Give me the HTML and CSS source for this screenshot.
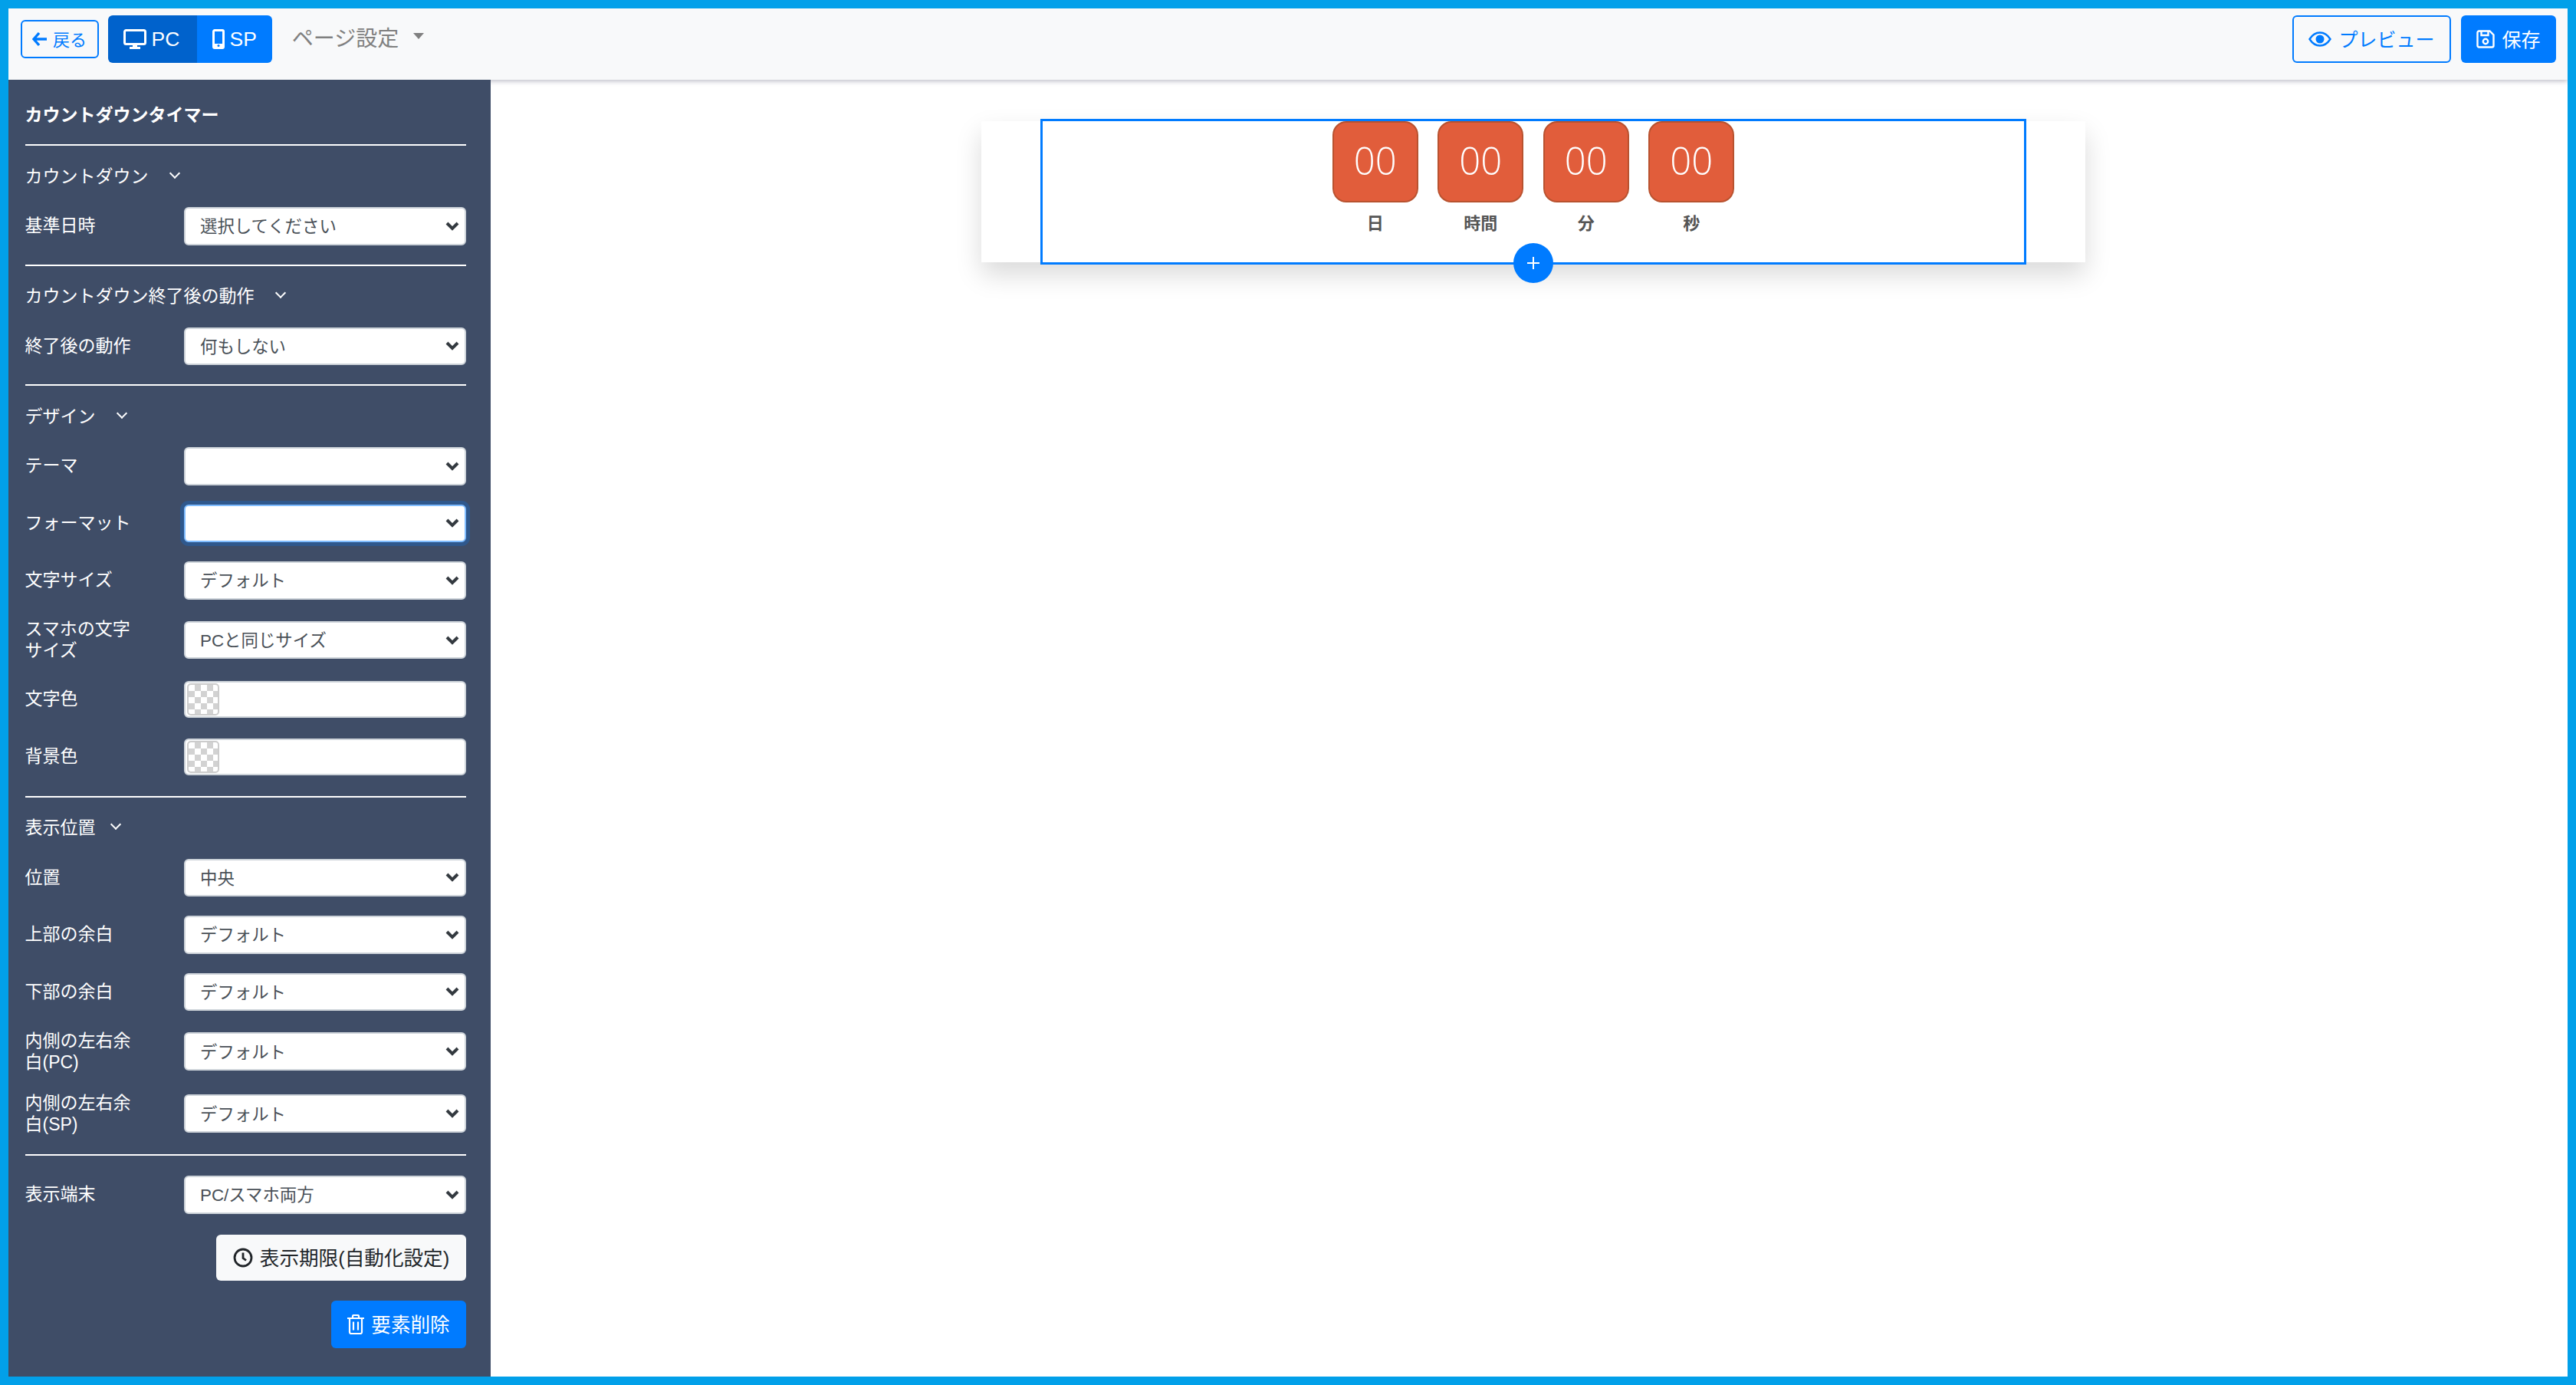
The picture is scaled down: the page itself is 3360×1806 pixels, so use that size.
FILE: index.html
```html
<!DOCTYPE html>
<html lang="ja">
<head>
    <meta charset="UTF-8">
    <meta name="viewport" content="width=device-width, initial-scale=1.0">
    <title>カウントダウンタイマー</title>
    <link rel="stylesheet" href="styles.css">
</head>
<body>
<div class="frame">

    <header class="topbar">
        <button class="btn btn-back">
            <svg class="icon" width="20" height="20" viewBox="0 0 20 20"><path d="M9 2 2 10l7 8M3 10h16" fill="none" stroke="currentColor" stroke-width="3.4"/></svg>
            戻る
        </button>
        <div class="device-group">
            <button class="device device-active">
                <svg class="icon" width="30" height="26" viewBox="0 0 30 26"><path d="M3.5 1.500h23a2 2 0 0 1 2 2v14a2 2 0 0 1-2 2h-23a2 2 0 0 1-2-2v-14a2 2 0 0 1 2-2z" fill="none" stroke="currentColor" stroke-width="3"/><path d="M12 20h6v3h-6zM8 23h14v3H8z" fill="currentColor"/></svg>
                PC
            </button>
            <button class="device">
                <svg class="icon" width="16" height="26" viewBox="0 0 16 26"><path d="M3 1.500h10a1.500 1.500 0 0 1 1.500 1.500v20a1.500 1.500 0 0 1-1.500 1.500H3A1.500 1.500 0 0 1 1.500 23V3A1.500 1.500 0 0 1 3 1.500z" fill="none" stroke="currentColor" stroke-width="3"/><path d="M2 19h12v5H2z" fill="currentColor"/><circle cx="8" cy="21.500" r="1.500" fill="#007bff"/></svg>
                SP
            </button>
        </div>
        <div class="page-setting">ページ設定<span class="caret"></span></div>
        <div class="topbar-right">
            <button class="btn btn-preview">
                <svg class="icon" width="30" height="20" viewBox="0 0 30 20"><path d="M1.500 10C5 4.500 9.500 1.500 15 1.500S25 4.500 28.500 10C25 15.500 20.500 18.500 15 18.500S5 15.500 1.500 10z" fill="none" stroke="currentColor" stroke-width="2.400"/><circle cx="15" cy="10" r="5.500" fill="currentColor"/></svg>
                プレビュー
            </button>
            <button class="btn btn-primary btn-save">
                <svg class="icon" width="24" height="24" viewBox="0 0 24 24"><path d="M3.500 1.500h14l5 5v14a2 2 0 0 1-2 2h-17a2 2 0 0 1-2-2v-17a2 2 0 0 1 2-2z" fill="none" stroke="currentColor" stroke-width="2.400"/><path d="M6.500 2v5h9V2" fill="none" stroke="currentColor" stroke-width="2.400"/><circle cx="12" cy="15" r="3.200" fill="none" stroke="currentColor" stroke-width="2.400"/></svg>
                保存
            </button>
        </div>
    </header>

    <div class="workspace">
        <aside class="sidebar">
            <div class="side-title">カウントダウンタイマー</div>
            <hr class="rule">

            <div class="side-head">カウントダウン<span class="chevron"></span></div>
            <div class="row">
                <label class="row-label">基準日時</label>
                <select class="select"><option>選択してください</option></select>
            </div>
            <hr class="rule">

            <div class="side-head">カウントダウン終了後の動作<span class="chevron"></span></div>
            <div class="row">
                <label class="row-label">終了後の動作</label>
                <select class="select"><option>何もしない</option></select>
            </div>
            <hr class="rule">

            <div class="side-head">デザイン<span class="chevron"></span></div>
            <div class="row">
                <label class="row-label">テーマ</label>
                <select class="select"><option></option></select>
            </div>
            <div class="row">
                <label class="row-label">フォーマット</label>
                <select class="select select-focus"><option></option></select>
            </div>
            <div class="row">
                <label class="row-label">文字サイズ</label>
                <select class="select"><option>デフォルト</option></select>
            </div>
            <div class="row row-wrap">
                <label class="row-label">スマホの文字サイズ</label>
                <select class="select"><option>PCと同じサイズ</option></select>
            </div>
            <div class="row row-color">
                <label class="row-label">文字色</label>
                <div class="color-input"><span class="swatch"></span></div>
            </div>
            <div class="row row-color">
                <label class="row-label">背景色</label>
                <div class="color-input"><span class="swatch"></span></div>
            </div>
            <hr class="rule">

            <div class="side-head side-head-tight">表示位置<span class="chevron"></span></div>
            <div class="row">
                <label class="row-label">位置</label>
                <select class="select"><option>中央</option></select>
            </div>
            <div class="row">
                <label class="row-label">上部の余白</label>
                <select class="select"><option>デフォルト</option></select>
            </div>
            <div class="row">
                <label class="row-label">下部の余白</label>
                <select class="select"><option>デフォルト</option></select>
            </div>
            <div class="row row-wrap">
                <label class="row-label">内側の左右余白(PC)</label>
                <select class="select"><option>デフォルト</option></select>
            </div>
            <div class="row row-wrap">
                <label class="row-label">内側の左右余白(SP)</label>
                <select class="select"><option>デフォルト</option></select>
            </div>
            <hr class="rule">

            <div class="row row-device">
                <label class="row-label">表示端末</label>
                <select class="select"><option>PC/スマホ両方</option></select>
            </div>
            <div class="side-actions">
                <button class="btn btn-light">
                    <svg class="icon" width="26" height="26" viewBox="0 0 26 26"><circle cx="13" cy="13" r="11" fill="none" stroke="currentColor" stroke-width="2.800"/><path d="M13 6.500V13.500l4 3" fill="none" stroke="currentColor" stroke-width="2.800"/></svg>
                    表示期限(自動化設定)
                </button>
                <button class="btn btn-primary btn-delete">
                    <svg class="icon" width="22" height="26" viewBox="0 0 22 26"><path d="M0 5h22M7 5V2.500A1.500 1.500 0 0 1 8.500 1h5A1.500 1.500 0 0 1 15 2.500V5M3 5v18a2 2 0 0 0 2 2h12a2 2 0 0 0 2-2V5M8 9.500v11M14 9.500v11" fill="none" stroke="currentColor" stroke-width="2.200"/></svg>
                    要素削除
                </button>
            </div>
        </aside>

        <main class="canvas">
            <section class="card">
                <div class="block">
                    <div class="timer">
                        <div class="unit"><div class="digits">00</div><div class="unit-label">日</div></div>
                        <div class="unit"><div class="digits">00</div><div class="unit-label">時間</div></div>
                        <div class="unit"><div class="digits">00</div><div class="unit-label">分</div></div>
                        <div class="unit"><div class="digits">00</div><div class="unit-label">秒</div></div>
                    </div>
                    <button class="add-btn">
                        <svg width="18" height="18" viewBox="0 0 18 18"><path d="M9 1v16M1 9h16" stroke="#fff" stroke-width="2"/></svg>
                    </button>
                </div>
            </section>
        </main>
    </div>

</div>
</body>
</html>
```

FILE: styles.css
```css
* {
    box-sizing: border-box;
}
body {
    margin: 0;
    font-family: "Liberation Sans", "Noto Sans CJK JP", sans-serif;
    background: #fff;
}
button {
    font-family: inherit;
    cursor: pointer;
}
.frame {
    display: flex;
    flex-direction: column;
    height: 1806px;
    border: 11px solid #02a0e9;
    overflow: hidden;
}
.icon {
    flex: none;
}

/* top bar */
.topbar {
    position: relative;
    z-index: 1;
    flex: none;
    display: flex;
    align-items: center;
    height: 93px;
    padding: 9px 15px 22px 15.500px;
    background: #f8f9fa;
    box-shadow: 0 2px 6px rgba(20, 20, 60, 0.28);
}
.btn {
    display: inline-flex;
    align-items: center;
    justify-content: center;
    gap: 9px;
    padding: 0 0 3px;
    border: 2px solid transparent;
    border-radius: 6px;
    font-size: 25.600px;
    white-space: nowrap;
}
.btn .icon {
    margin-top: 3px;
}
.btn-primary {
    background: #007bff;
    color: #fff;
}
.btn-back {
    width: 102px;
    height: 50px;
    gap: 7px;
    background: transparent;
    border-color: #007bff;
    color: #007bff;
    font-size: 22px;
}
.device-group {
    display: flex;
    height: 62px;
    margin-left: 12px;
    border-radius: 6px;
    overflow: hidden;
}
.device {
    display: flex;
    align-items: center;
    gap: 7px;
    border: none;
    padding: 0 20px 0 20px;
    background: #007bff;
    color: #fff;
    font-size: 26.500px;
}
.device-active {
    width: 116px;
    padding-right: 0;
    background: #0062cc;
}
.page-setting {
    display: flex;
    align-items: center;
    margin-left: 26px;
    margin-top: -6px;
    color: #808080;
    font-size: 28px;
}
.caret {
    width: 0;
    height: 0;
    margin-left: 19px;
    margin-top: -3px;
    border-top: 8px solid #808080;
    border-left: 7px solid transparent;
    border-right: 7px solid transparent;
}
.topbar-right {
    display: flex;
    gap: 13px;
    margin-left: auto;
}
.btn-preview {
    width: 207px;
    height: 62px;
    background: transparent;
    border-color: #007bff;
    color: #007bff;
    font-size: 25px;
}
.btn-save {
    width: 124px;
    height: 62px;
    font-size: 25px;
}

/* sidebar */
.workspace {
    flex: 1;
    display: flex;
    min-height: 0;
}
.sidebar {
    position: relative;
    z-index: 2;
    flex: none;
    width: 629px;
    padding: 34px 32px 0 21.500px;
    background: #3f4d67;
    color: #fff;
    font-size: 23px;
}
.side-title {
    height: 24px;
    line-height: 24px;
    font-weight: bold;
}
.rule {
    height: 2px;
    margin: 0;
    border: none;
    background: #fff;
}
.side-title + .rule {
    margin-top: 26px;
}
.side-head {
    display: flex;
    align-items: center;
    height: 28px;
    margin: 23.500px 0 28.500px;
}
.chevron {
    width: 10px;
    height: 10px;
    margin-left: 29px;
    margin-top: -4px;
    border-right: 2.500px solid #fff;
    border-bottom: 2.500px solid #fff;
    transform: rotate(45deg);
}
.side-head-tight .chevron {
    margin-left: 21px;
}
.row {
    display: flex;
    align-items: center;
    height: 49.500px;
    margin-bottom: 25px;
}
.row-wrap {
    height: 56px;
}
.row-color {
    height: 48px;
    margin-bottom: 27px;
}
.row-device {
    margin-top: 26px;
    margin-bottom: 27px;
}
.row-label {
    flex: none;
    width: 140px;
    margin-right: 67.500px;
    line-height: 28px;
    margin-top: -1px;
}
.select {
    appearance: none;
    flex: 1;
    min-width: 0;
    height: 49.500px;
    padding: 2px 40px 0 19px;
    border: 2px solid #ced4da;
    border-radius: 6px;
    font-family: inherit;
    font-size: 22.400px;
    color: #495057;
    background: #fff url("data:image/svg+xml,%3Csvg xmlns='http://www.w3.org/2000/svg' width='18' height='12' viewBox='0 0 18 12'%3E%3Cpath d='M2 2l7 7 7-7' fill='none' stroke='%23343a40' stroke-width='4'/%3E%3C/svg%3E") no-repeat right 7px center;
}
.select-focus {
    border-color: #80bdff;
    box-shadow: 0 0 0 5px rgba(0, 123, 255, 0.25);
}
.color-input {
    flex: 1;
    display: flex;
    align-items: center;
    height: 48px;
    padding: 0 2px;
    border: 2px solid #ced4da;
    border-radius: 6px;
    background: #fff;
}
.swatch {
    width: 42px;
    height: 42px;
    border: 2px solid #ccc;
    border-radius: 5px;
    background: repeating-conic-gradient(#d2d2d2 0 25%, #fff 0 50%) 0 0 / 16px 16px;
}
.side-actions {
    display: flex;
    flex-direction: column;
    align-items: flex-end;
    gap: 26px;
}
.btn-light {
    width: 326px;
    height: 60px;
    background: #f8f9fa;
    color: #212529;
}
.btn-delete {
    width: 176px;
    height: 62px;
}

/* canvas */
.canvas {
    flex: 1;
    padding: 54px 0 0 11px;
    background: #fff;
    display: flex;
    justify-content: center;
    align-items: flex-start;
}
.card {
    width: 1440px;
    height: 184px;
    padding: 0 77px;
    background: #fff;
    box-shadow: 0 16px 32px rgba(0, 0, 0, 0.15);
}
.block {
    position: relative;
    height: 190px;
    margin-top: -3px;
    border: 3px solid #007bff;
    background: #fff;
}
.timer {
    display: flex;
    justify-content: center;
    gap: 25.500px;
}
.unit {
    width: 112px;
    text-align: center;
}
.digits {
    display: flex;
    align-items: center;
    justify-content: center;
    height: 106px;
    padding-bottom: 4px;
    border: 2px solid #b8522f;
    border-radius: 18px;
    background: #e15d3b;
    color: #fff;
    font-family: "Open Sans", "Liberation Sans", sans-serif;
    font-weight: 300;
    font-size: 49px;
}
.unit-label {
    margin-top: 14px;
    line-height: 28px;
    font-size: 22px;
    font-weight: bold;
    color: #555;
}
.add-btn {
    position: absolute;
    left: 50%;
    bottom: -27px;
    display: flex;
    align-items: center;
    justify-content: center;
    width: 52px;
    height: 52px;
    margin-left: -26px;
    padding: 0;
    border: none;
    border-radius: 50%;
    background: #007bff;
}
```
